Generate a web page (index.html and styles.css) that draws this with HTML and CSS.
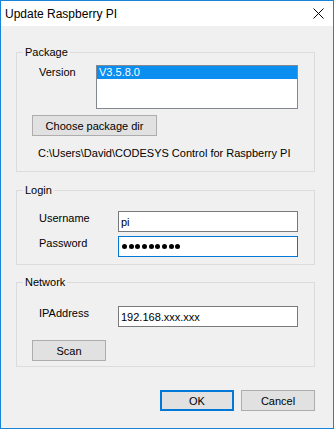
FILE: index.html
```html
<!DOCTYPE html>
<html>
<head>
<meta charset="utf-8">
<link rel="stylesheet" href="styles.css">
</head>
<body>
<div class="window">
  <div class="titlebar">
    <span class="title">Update Raspberry PI</span>
    <svg class="close" width="11" height="11" viewBox="0 0 11 11"><path d="M0.5 0.5 L10.5 10.5 M10.5 0.5 L0.5 10.5" stroke="#000" stroke-width="1" fill="none"/></svg>
  </div>
  <div class="body">
    <section class="group group-package">
      <div class="legend">Package</div>
      <div class="version-row">
        <span class="label">Version</span>
        <div class="listbox"><div class="list-item selected">V3.5.8.0</div></div>
      </div>
      <button class="btn btn-choose">Choose package dir</button>
      <div class="path">C:\Users\David\CODESYS Control for Raspberry PI</div>
    </section>
    <section class="group group-login">
      <div class="legend">Login</div>
      <div class="form-grid login-grid">
        <span class="label">Username</span>
        <div class="textbox">pi</div>
        <span class="label">Password</span>
        <div class="textbox focused"><span class="dots"><i></i><i></i><i></i><i></i><i></i><i></i><i></i><i></i><i></i></span></div>
      </div>
    </section>
    <section class="group group-network">
      <div class="legend">Network</div>
      <div class="form-grid network-grid">
        <span class="label">IPAddress</span>
        <div class="textbox">192.168.xxx.xxx</div>
      </div>
      <button class="btn btn-scan">Scan</button>
    </section>
    <div class="footer">
      <button class="btn btn-ok">OK</button>
      <button class="btn btn-cancel">Cancel</button>
    </div>
  </div>
</div>
</body>
</html>
```
FILE: styles.css
```css
body {
  margin: 0;
}
.window {
  width: 334px;
  height: 429px;
  box-sizing: border-box;
  border: 1px solid #1883d7;
  background: #f0f0f0;
  font-family: "Liberation Sans", Arial, sans-serif;
  font-size: 11px;
  color: #000;
  display: flex;
  flex-direction: column;
}
.titlebar {
  height: 25px;
  flex: none;
  background: #fff;
  display: flex;
  align-items: center;
  justify-content: space-between;
  padding: 0 9px 0 4px;
}
.title {
  font-size: 12px;
}
.close {
  display: block;
}
.body {
  padding: 26px 18px 0 15px;
  display: flex;
  flex-direction: column;
}
.group {
  border: 1px solid #dcdcdc;
  display: flex;
  flex-direction: column;
  align-items: flex-start;
}
.legend {
  margin: -7px 0 -6px 6px;
  padding: 0 2px;
  background: #f0f0f0;
  line-height: 13px;
}
.label {
  line-height: 13px;
  padding-top: 1px;
}
.group-package {
  padding-bottom: 11px;
}
.version-row {
  display: grid;
  grid-template-columns: 57px 202px;
  margin: 12px 0 0 22px;
}
.listbox {
  height: 44px;
  box-sizing: border-box;
  border: 1px solid #828790;
  background: #fff;
}
.list-item {
  line-height: 13px;
  padding-left: 2px;
}
.list-item.selected {
  background: #0a8ef0;
  color: #fff;
}
.btn {
  font: inherit;
  color: #000;
  margin: 0;
  padding: 0;
  height: 21px;
  box-sizing: border-box;
  border: 1px solid #adadad;
  background: #e1e1e1;
  display: block;
}
.btn-choose {
  width: 125px;
  margin: 6px 0 0 15px;
}
.path {
  margin: 11px 0 0 21px;
  line-height: 13px;
}
.group-login {
  margin-top: 18px;
  padding-bottom: 7px;
}
.form-grid {
  display: grid;
  grid-template-columns: 79px 180px;
  row-gap: 4px;
  margin-left: 22px;
  align-items: start;
}
.login-grid {
  margin-top: 20px;
}
.network-grid {
  margin-top: 23px;
}
.textbox {
  height: 21px;
  box-sizing: border-box;
  border: 1px solid #7a7a7a;
  background: #fff;
  padding-left: 2px;
  display: flex;
  align-items: center;
}
.textbox.focused {
  border-color: #0078d7;
}
.dots {
  display: flex;
  gap: 1.67px;
  margin-left: 1px;
}
.dots i {
  width: 5px;
  height: 5px;
  border-radius: 50%;
  background: #000;
}
.group-network {
  margin-top: 17px;
  padding-bottom: 5px;
}
.btn-scan {
  width: 74px;
  margin: 13px 0 0 15px;
}
.footer {
  display: flex;
  justify-content: flex-end;
  gap: 7px;
  margin-top: 23px;
}
.btn-ok,
.btn-cancel {
  width: 74px;
}
.btn-ok {
  border: 2px solid #0078d7;
}
```
